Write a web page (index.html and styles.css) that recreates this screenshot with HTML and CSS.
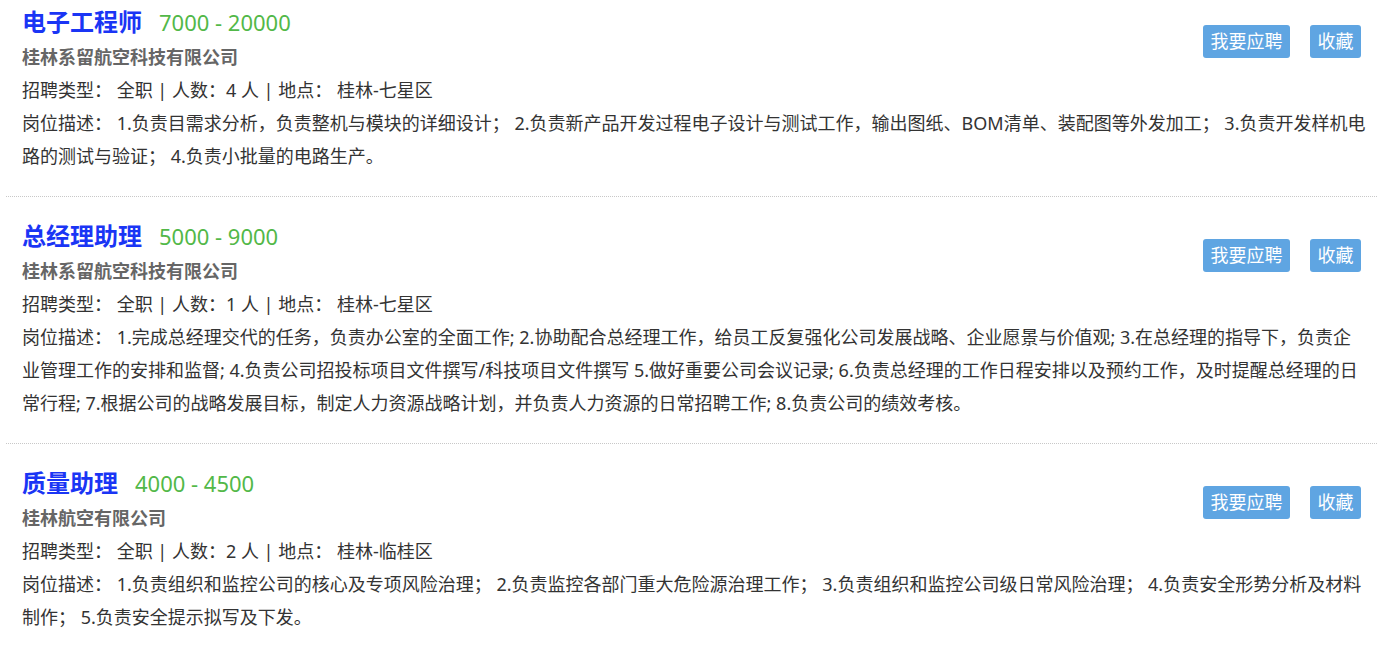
FILE: index.html
```html
<!DOCTYPE html>
<html lang="zh-CN">
<head>
<meta charset="utf-8">
<title>招聘信息</title>
<link rel="stylesheet" href="styles.css">
</head>
<body>
<div class="job-list">
  <div class="job">
    <div class="actions"><a class="btn">我要应聘</a><a class="btn">收藏</a></div>
    <div class="job-title"><span class="name">电子工程师</span><span class="salary">7000 - 20000</span></div>
    <div class="company">桂林系留航空科技有限公司</div>
    <div class="meta">招聘类型： 全职 | 人数：4 人 | 地点： 桂林-七星区</div>
    <div class="desc">岗位描述： 1.负责目需求分析，负责整机与模块的详细设计； 2.负责新产品开发过程电子设计与测试工作，输出图纸、BOM清单、装配图等外发加工； 3.负责开发样机电路的测试与验证； 4.负责小批量的电路生产。</div>
  </div>
  <div class="job">
    <div class="actions"><a class="btn">我要应聘</a><a class="btn">收藏</a></div>
    <div class="job-title"><span class="name">总经理助理</span><span class="salary">5000 - 9000</span></div>
    <div class="company">桂林系留航空科技有限公司</div>
    <div class="meta">招聘类型： 全职 | 人数：1 人 | 地点： 桂林-七星区</div>
    <div class="desc">岗位描述： 1.完成总经理交代的任务，负责办公室的全面工作; 2.协助配合总经理工作，给员工反复强化公司发展战略、企业愿景与价值观; 3.在总经理的指导下，负责企业管理工作的安排和监督; 4.负责公司招投标项目文件撰写/科技项目文件撰写 5.做好重要公司会议记录; 6.负责总经理的工作日程安排以及预约工作，及时提醒总经理的日常行程; 7.根据公司的战略发展目标，制定人力资源战略计划，并负责人力资源的日常招聘工作; 8.负责公司的绩效考核。</div>
  </div>
  <div class="job">
    <div class="actions"><a class="btn">我要应聘</a><a class="btn">收藏</a></div>
    <div class="job-title"><span class="name">质量助理</span><span class="salary">4000 - 4500</span></div>
    <div class="company">桂林航空有限公司</div>
    <div class="meta">招聘类型： 全职 | 人数：2 人 | 地点： 桂林-临桂区</div>
    <div class="desc">岗位描述： 1.负责组织和监控公司的核心及专项风险治理； 2.负责监控各部门重大危险源治理工作； 3.负责组织和监控公司级日常风险治理； 4.负责安全形势分析及材料制作； 5.负责安全提示拟写及下发。</div>
  </div>
</div>
</body>
</html>
```

FILE: styles.css
```css
html, body {
  margin: 0;
  padding: 0;
  background: #fff;
}

body {
  font-family: "Noto Sans", "Noto Sans CJK SC", sans-serif;
  font-size: 18px;
  color: #333;
}

.job-list {
  padding: 0 1px 0 6px;
}

.job {
  padding: 20px 10px 23px 16px;
  border-bottom: 1px dotted #c8c8c8;
}

.job:first-child {
  padding-top: 3px;
}

.actions {
  float: right;
  display: flex;
  gap: 20px;
  margin-top: 22px;
  margin-right: 6px;
}

.btn {
  display: block;
  height: 33px;
  line-height: 33px;
  padding: 0 7.5px;
  background: #5fa5e2;
  color: #fff;
  font-size: 18px;
  border-radius: 3px;
  cursor: pointer;
}

.job-title {
  line-height: 38px;
  height: 38px;
}

.name {
  font-size: 24px;
  font-weight: bold;
  color: #1a35f5;
}

.salary {
  font-size: 22px;
  color: #52b848;
  margin-left: 17px;
}

.company {
  line-height: 33px;
  font-weight: bold;
  color: #666;
}

.meta,
.desc {
  line-height: 33px;
}
```
